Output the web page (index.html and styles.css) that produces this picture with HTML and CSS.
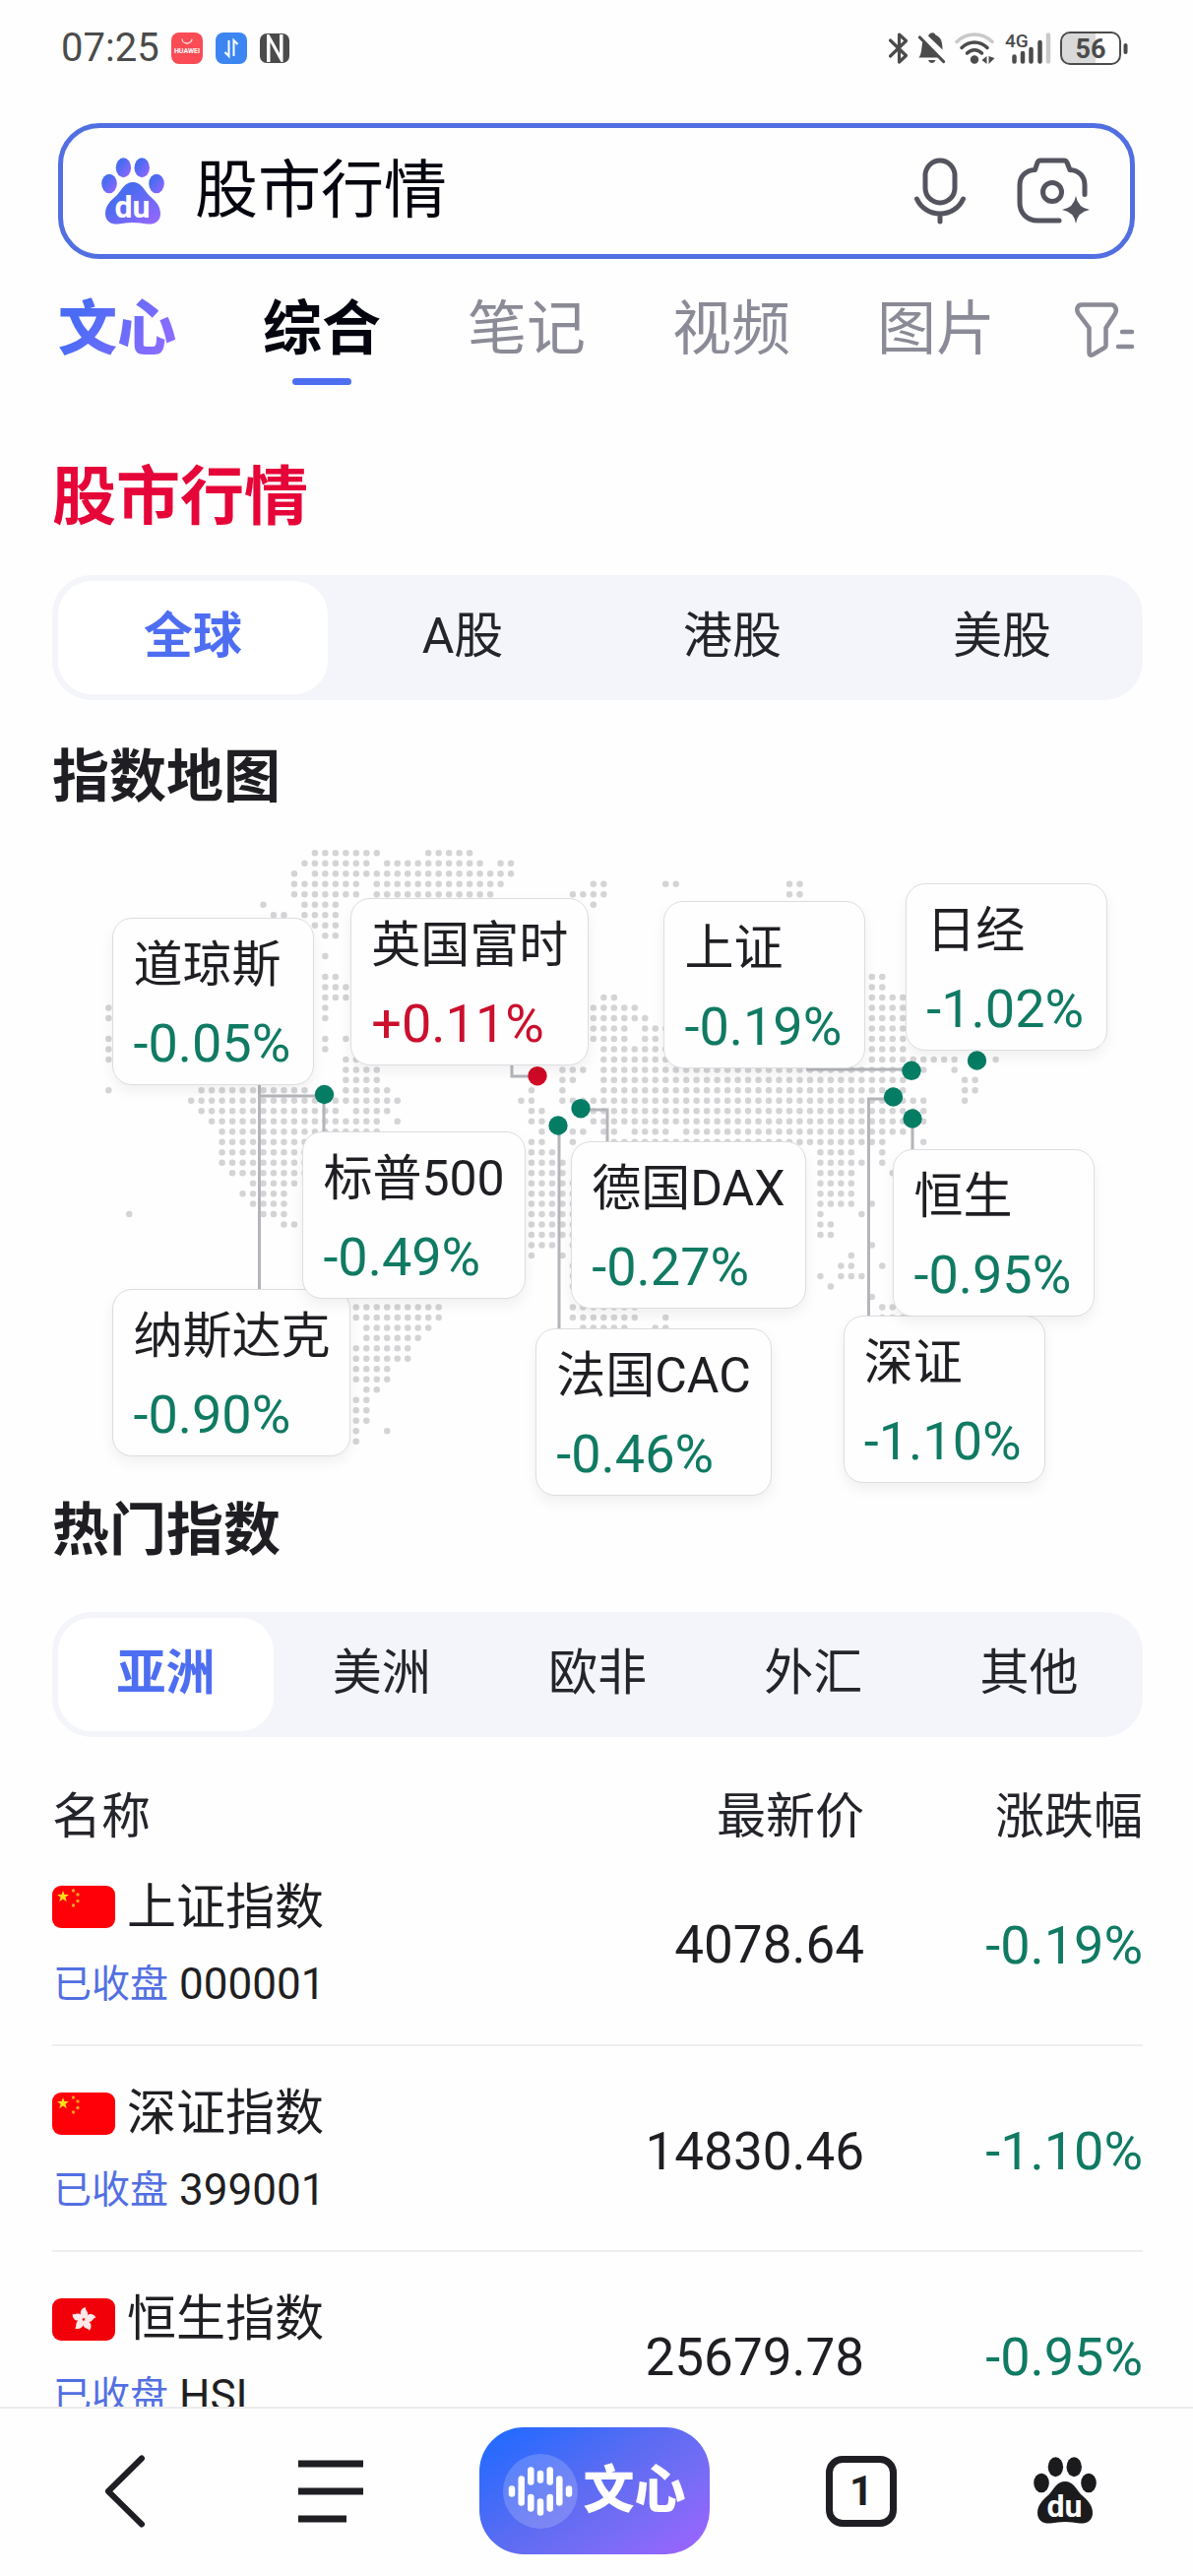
FILE: index.html
```html
<!DOCTYPE html>
<html lang="zh-CN">
<head>
<meta charset="utf-8">
<meta name="viewport" content="width=device-width, initial-scale=1">
<title>股市行情</title>
<link rel="stylesheet" href="styles.css">
</head>
<body>
<svg class="defs" width="0" height="0" aria-hidden="true">
  <defs>
    <linearGradient id="brand" x1="0" y1="0" x2="1" y2="1">
      <stop offset="0.3" stop-color="#4a6cf0"/><stop offset="1" stop-color="#9a66ff"/>
    </linearGradient>
    <symbol id="paw" viewBox="0 0 64 69">
      <ellipse cx="22.4" cy="10.2" rx="7.7" ry="10"/><ellipse cx="41.2" cy="10.2" rx="7.7" ry="10"/>
      <ellipse cx="8" cy="26.5" rx="7.8" ry="9.8"/><ellipse cx="56" cy="26.5" rx="7.8" ry="9.8"/>
      <path d="M32 25C40 25 43 32 48 38C55 44 60 49 60 57C60 65 54 68 47 67.5C41 67 38 66 32 66C26 66 23 67 17 67.5C10 68 4 65 4 57C4 49 9 44 16 38C21 32 24 25 32 25Z"/>
      <text class="paw-text" x="31.500" y="61" text-anchor="middle">du</text>
    </symbol>
    <symbol id="flag-cn" viewBox="0 0 64 43">
      <rect width="64" height="43" rx="9" fill="#ff0008"/>
      <path fill="#ffdf1a" d="M11 5l1.500 4h4.500l-3.600 2.700 1.400 4.500-3.800-2.700-3.800 2.700 1.400-4.500L5 9h4.500z"/>
      <g fill="#f7a01c"><circle cx="21.500" cy="5" r="1.700"/><circle cx="26" cy="9" r="1.700"/><circle cx="26" cy="15.500" r="1.700"/><circle cx="21.500" cy="20" r="1.700"/></g>
    </symbol>
    <symbol id="flag-hk" viewBox="0 0 64 43">
      <rect width="64" height="43" rx="9" fill="#f2000a"/>
      <g fill="#ffe9ea" transform="translate(32 21.500)">
        <path id="petal" d="M0-1C-5-5-4-11 2-12.500C1-10 5-8 4-4.500C3.500-2 1.500-1 0-1Z"/>
        <use href="#petal" transform="rotate(72)"/><use href="#petal" transform="rotate(144)"/>
        <use href="#petal" transform="rotate(216)"/><use href="#petal" transform="rotate(288)"/>
      </g>
    </symbol>
  </defs>
</svg>

<div class="app">
  <header class="status">
    <div class="status-group">
      <time class="clock">07:25</time>
      <svg class="app-badge" viewBox="0 0 32 32" aria-hidden="true"><rect width="32" height="32" rx="8" fill="#fb4b55"/><path d="M11 6.500a5 4.500 0 0 0 10 0" fill="none" stroke="#ffd9dc" stroke-width="1.300"/><text class="badge-text" x="16" y="20.500" text-anchor="middle">HUAWEI</text></svg>
      <svg class="app-badge" viewBox="0 0 32 32" aria-hidden="true"><rect width="32" height="32" rx="8" fill="#3d86f2"/><path d="M13.500 8v16l-4-4M18.500 24V8l4 4" fill="none" stroke="#fff" stroke-width="2"/></svg>
      <svg class="nfc" viewBox="0 0 30 30" aria-hidden="true"><rect width="30" height="30" rx="7" fill="#4b4b4b"/><path d="M7 1v28h3.500V9l11 20h2V1H20v19L9.500 1z" fill="#fff"/><path d="M12 12v16l6 2zM13.500 0l5 9V0z" fill="#4b4b4b"/></svg>
    </div>
    <div class="status-group status-right">
      <svg width="21" height="32" viewBox="0 0 21 32" aria-hidden="true"><path d="M1.500 8l16 15.500-7 6.500V2l7 6.500-16 15.500" fill="none" stroke="#4b4b4b" stroke-width="3.200" stroke-linejoin="round" stroke-linecap="round"/></svg>
      <svg width="28" height="32" viewBox="0 0 28 32" aria-hidden="true"><path d="M10 3.500C12-.5 16-.5 17.500 2.500C23 5 24.500 9 24.500 17.500zM4.500 8.500L22 25.500H.500C3.500 22 3 15 4.500 8.500zM10 28h7.500c-1.500 4-6 4-7.500 0z" fill="#4b4b4b"/><path d="M1.500 5l24 24.500" stroke="#4b4b4b" stroke-width="3.200" stroke-linecap="round"/></svg>
      <svg width="42" height="32" viewBox="0 0 42 32" aria-hidden="true"><g fill="none" stroke-width="3.500" stroke-linecap="round"><path d="M2 9.500c10-10 26-10 36 0" stroke="#c9c9c9"/><path d="M7 15.500c7.500-7.500 18.500-7.500 26 0M12.500 21c4.500-4.500 10.500-4.500 15 0" stroke="#4b4b4b"/></g><circle cx="20" cy="27.500" r="4.200" fill="#4b4b4b"/><path d="M32.500 24v8l-5-4zM34.500 24v8l6-6z" fill="#4b4b4b"/></svg>
      <svg class="signal" width="47" height="32" viewBox="0 0 47 32" aria-hidden="true"><g stroke="#4b4b4b" stroke-width="4.500" stroke-linecap="round"><path d="M9.500 24.500v5M18 21v8.500M26.500 17v12.500M35.500 10v19.500"/><path d="M44 2.500v27" stroke="#c9c9c9"/></g><text class="net-text" x="0" y="15">4G</text></svg>
      <svg width="69" height="34" viewBox="0 0 69 34" aria-hidden="true"><path d="M10 2h26v30H10a8 8 0 0 1-8-8V10a8 8 0 0 1 8-8z" fill="#d9d9d9"/><rect x="1" y="1" width="60" height="32" rx="9" fill="none" stroke="#4b4b4b" stroke-width="2"/><rect x="64.500" y="12" width="4" height="11" rx="2" fill="#4b4b4b"/><text class="battery-text" x="31" y="26.500" text-anchor="middle">56</text></svg>
    </div>
  </header>

  <main class="content">
    <form class="search">
      <svg class="paw" aria-hidden="true"><use href="#paw" fill="url(#brand)"/></svg>
      <input class="search-input" type="text" value="股市行情" aria-label="搜索">
      <button class="icon-button" type="button" aria-label="语音搜索">
        <svg width="54" height="68" viewBox="0 0 54 68" fill="none" stroke="#53545e" stroke-width="5" stroke-linecap="round"><rect x="12" y="3" width="30" height="43" rx="15"/><path d="M3.500 42c4 9 13 15 23.500 15s19.500-6 23.500-15M27 57v8"/></svg>
      </button>
      <button class="icon-button" type="button" aria-label="拍照搜索">
        <svg width="75" height="68" viewBox="0 0 75 68" fill="none" stroke="#53545e" stroke-width="5" stroke-linecap="round" stroke-linejoin="round"><path d="M69 37.500V28c0-9-6-15-15-15.500L51 5q-1-2-3-2H24q-2 0-3 2l-2.500 7.500C9 13 3 19 3 28v18c0 10 7 18 18 18h22"/><circle cx="36" cy="35" r="9.500"/><path d="M60 39q2 12 14 14-12 2-14 14-2-12-14-14 12-2 14-14z" fill="#53545e" stroke="none"/></svg>
      </button>
    </form>

    <nav class="tabs" aria-label="搜索分类">
      <a class="tab tab-brand" href="#">文心</a>
      <a class="tab tab-active" href="#" aria-current="page">综合</a>
      <a class="tab" href="#">笔记</a>
      <a class="tab" href="#">视频</a>
      <a class="tab" href="#">图片</a>
      <button class="icon-button filter" type="button" aria-label="筛选">
        <svg width="61" height="56" viewBox="0 0 61 56" fill="none" stroke="#8a8b96" stroke-width="4.500" stroke-linecap="round" stroke-linejoin="round"><path d="M7 2.500h30c4 0 6 5 4 9L31.500 26v17.500q0 2-2 3l-11 6.500q-4 2-4-2V26L3.500 11.500C1 7.500 2.500 2.500 7 2.500z"/><path d="M48 30h10M44 45h14"/></svg>
      </button>
    </nav>

    <h1 class="title">股市行情</h1>

    <div class="segmented">
      <button class="segment segment-active" type="button">全球</button>
      <button class="segment" type="button">A股</button>
      <button class="segment" type="button">港股</button>
      <button class="segment" type="button">美股</button>
    </div>

    <h2 class="heading">指数地图</h2>
    <section class="map" aria-label="指数地图">
      <svg class="map-art" viewBox="52 860 1108 660" aria-hidden="true">
        <g transform="translate(109.300 866.300) scale(10.480)">
          <path class="land" d="M20 0h6.100M31 0h4.100M19 1h6.100M27 1h9.100M38 1h1.100M18 2h.1M20 2h19.100M18 3h6.100M26 3h12.100M47 3h1.100M54 3h1.100M66 3h1.100M18 4h6.100M26 4h11.100M45 4h3.100M66 4h1.100M15 5h.1M19 5h3.100M47 5h.1M16 6h1.100M19 6h3.100M20 7h2.100M21 8h1.100M21 10h.1M21 12h1.100M74 12h1.100M21 13h2.100M74 13h1.100M21 14h2.100M48 14h1.100M74 14h3.100M0 15h.1M21 15h.1M47 15h4.100M74 15h3.100M0 16h.1M21 16h.1M47 16h5.100M74 16h3.100M47 17h3.100M52 17h2.100M74 17h3.100M0 18h.1M21 18h.1M23 18h.1M47 18h3.100M52 18h1.100M74 18h3.100M0 19h.1M21 19h.1M48 19h6.100M74 19h3.100M0 20h.1M23 20h1.100M48 20h6.100M74 20h8.100M86 20h.1M23 21h3.100M44 21h2.100M48 21h31.100M82 21h.1M23 22h3.100M44 22h1.100M48 22h29.100M83 22h1.100M0 23h.1M9 23h10.100M23 23h4.100M41 23h.1M44 23h.1M48 23h29.100M83 23h1.100M8 24h12.100M22 24h6.100M40 24h1.100M44 24h35.100M83 24h.1M9 25h13.100M24 25h3.100M41 25h1.100M46 25h33.100M10 26h16.100M28 26h.1M41 26h1.100M47 26h2.100M50 26h29.100M11 27h15.100M42 27h.1M45 27h1.100M48 27h1.100M51 27h3.100M56 27h21.100M11 28h8.100M41 28h1.100M45 28h.1M49 28h26.100M79 28h.1M11 29h8.100M41 29h2.100M69 29h3.100M75 29h.1M11 30h8.100M41 30h3.100M69 30h4.100M75 30h.1M12 31h7.100M41 31h3.100M69 31h3.100M76 31h.1M14 32h4.100M41 32h4.100M69 32h3.100M13 33h4.100M41 33h4.100M69 33h3.100M14 34h3.100M41 34h4.100M69 34h3.100M74 34h.1M2 35h.1M15 35h2.100M41 35h4.100M69 35h.1M73 35h.1M17 36h1.100M41 36h4.100M69 36h1.100M41 37h4.100M69 37h1.100M41 38h2.100M45 38h.1M74 38h.1M41 39h.1M44 39h.1M72 39h.1M45 40h.1M71 40h1.100M75 40h.1M45 41h.1M69 41h.1M71 41h2.100M45 42h.1M70 42h.1M74 43h.1M24 44h8.100M45 44h6.100M75 44h1.100M24 45h8.100M45 45h6.100M54 45h.1M75 45h2.100M25 46h6.100M46 46h4.100M53 46h1.100M25 47h5.100M24 48h5.100M24 49h5.100M24 50h3.100M24 51h3.100M25 52h1.100M24 53h1.100M24 54h1.100M24 55h1.100M24 56h.1M27 56h.1M24 57h.1"/>
        </g>
        <g class="leads">
          <path d="M262.500 1100V1312M262.500 1113H328V1152"/>
          <path d="M519 1080V1093H545"/>
          <path d="M589 1127H616V1160"/>
          <path d="M567 1143V1352"/>
          <path d="M818 1086H925"/>
          <path d="M906 1116H881.500V1340"/>
          <path d="M926 1136V1170"/>
        </g>
        <g class="cities">
          <circle cx="328.500" cy="1111.500" r="9.700"/>
          <circle class="city-up" cx="545" cy="1092.700" r="9.700"/>
          <circle cx="589" cy="1125.700" r="9.700"/>
          <circle cx="566" cy="1143" r="9.700"/>
          <circle cx="925" cy="1087.300" r="9.700"/>
          <circle cx="991.500" cy="1077" r="9.700"/>
          <circle cx="906.500" cy="1114" r="9.700"/>
          <circle cx="926" cy="1136" r="9.700"/>
        </g>
      </svg>
      <div class="pin pin-nasdaq"><span>纳斯达克</span><span class="pin-value down">-0.90%</span></div>
      <div class="pin pin-dow"><span>道琼斯</span><span class="pin-value down">-0.05%</span></div>
      <div class="pin pin-ftse"><span>英国富时</span><span class="pin-value up">+0.11%</span></div>
      <div class="pin pin-sse"><span>上证</span><span class="pin-value down">-0.19%</span></div>
      <div class="pin pin-nikkei"><span>日经</span><span class="pin-value down">-1.02%</span></div>
      <div class="pin pin-sp"><span>标普500</span><span class="pin-value down">-0.49%</span></div>
      <div class="pin pin-dax"><span>德国DAX</span><span class="pin-value down">-0.27%</span></div>
      <div class="pin pin-cac"><span>法国CAC</span><span class="pin-value down">-0.46%</span></div>
      <div class="pin pin-szse"><span>深证</span><span class="pin-value down">-1.10%</span></div>
      <div class="pin pin-hsi"><span>恒生</span><span class="pin-value down">-0.95%</span></div>
    </section>

    <h2 class="heading heading-hot">热门指数</h2>
    <div class="segmented">
      <button class="segment segment-active" type="button">亚洲</button>
      <button class="segment" type="button">美洲</button>
      <button class="segment" type="button">欧非</button>
      <button class="segment" type="button">外汇</button>
      <button class="segment" type="button">其他</button>
    </div>

    <table class="quotes">
      <thead>
        <tr><th class="col-name" scope="col">名称</th><th scope="col">最新价</th><th class="col-change" scope="col">涨跌幅</th></tr>
      </thead>
      <tbody>
        <tr>
          <td class="col-name"><div class="name"><svg class="flag" role="img" aria-label="中国"><use href="#flag-cn"/></svg>上证指数</div><div class="sub"><span class="state">已收盘</span>000001</div></td>
          <td class="number price">4078.64</td><td class="number down">-0.19%</td>
        </tr>
        <tr>
          <td class="col-name"><div class="name"><svg class="flag" role="img" aria-label="中国"><use href="#flag-cn"/></svg>深证指数</div><div class="sub"><span class="state">已收盘</span>399001</div></td>
          <td class="number price">14830.46</td><td class="number down">-1.10%</td>
        </tr>
        <tr>
          <td class="col-name"><div class="name"><svg class="flag" role="img" aria-label="中国香港"><use href="#flag-hk"/></svg>恒生指数</div><div class="sub"><span class="state">已收盘</span>HSI</div></td>
          <td class="number price">25679.78</td><td class="number down">-0.95%</td>
        </tr>
      </tbody>
    </table>
  </main>

  <footer class="toolbar">
    <button class="icon-button" type="button" aria-label="返回">
      <svg width="42" height="74" viewBox="0 0 42 74" fill="none" stroke="#1f1f23" stroke-width="6" stroke-linecap="round" stroke-linejoin="round"><path d="M38 3.500L4 37l34 33.500"/></svg>
    </button>
    <button class="icon-button" type="button" aria-label="菜单">
      <svg width="66" height="64" viewBox="0 0 66 64" stroke="#1f1f23" stroke-width="7"><path d="M0 4h66M0 32h66M0 60h49"/></svg>
    </button>
    <button class="assistant" type="button">
      <svg width="76" height="76" viewBox="-38 -38 76 76" aria-hidden="true"><circle r="38" fill="#fff" fill-opacity=".18"/><g stroke="#fff" stroke-width="6.500" stroke-linecap="round"><path d="M-29-2.500v5M-19.300-12.500v24M-9.700-21.500v12M0-18v6.500M9.700-21.500v12M19.300-12.500v24M29-2.500v5M-9.700 6v11.500M0 10.500v11M9.700 6v11.500"/></g></svg>
      <span>文心</span>
    </button>
    <button class="icon-button tab-count" type="button" aria-label="标签页">1</button>
    <button class="icon-button" type="button" aria-label="首页">
      <svg class="paw" aria-hidden="true"><use href="#paw" fill="#1b1b1e"/></svg>
    </button>
  </footer>
</div>
</body>
</html>
```
FILE: styles.css
```css
* {
  box-sizing: border-box;
}

body {
  margin: 0;
  background: #fefefe;
  color: #1f1f23;
  font-family: Roboto, "Noto Sans CJK SC", sans-serif;
  font-size: 50px;
}

button,
input {
  border: 0;
  padding: 0;
  background: none;
  color: inherit;
  font: inherit;
}

a {
  color: inherit;
  text-decoration: none;
}

svg {
  display: block;
  flex: none;
}

.defs {
  position: absolute;
}

.app {
  display: flex;
  flex-direction: column;
  height: 100vh;
}

/* Status bar */
.status {
  display: flex;
  flex: none;
  align-items: center;
  justify-content: space-between;
  height: 98px;
  padding: 0 66px 0 62px;
}

.status-group {
  display: flex;
  align-items: center;
}

.status-right {
  gap: 9px;
}

.clock {
  margin-right: 12px;
  color: #4b4b4b;
  font-size: 40px;
  line-height: 48px;
}

.app-badge {
  width: 32px;
  height: 32px;
  margin-right: 13px;
}

.nfc {
  width: 30px;
  height: 30px;
}

.signal {
  overflow: visible;
}

.badge-text {
  fill: #fff;
  font-size: 7px;
  font-weight: 700;
}

.net-text {
  fill: #4b4b4b;
  font-size: 19px;
  font-weight: 500;
}

.battery-text {
  fill: #4b4b4b;
  font-size: 27px;
  font-weight: 700;
}

/* Scrolling page */
.content {
  flex: 1;
  min-height: 0;
  padding: 27px 51px 0 53px;
  overflow-x: hidden;
  overflow-y: auto;
  scrollbar-width: none;
}

.icon-button {
  display: flex;
  align-items: center;
  justify-content: center;
}

.search {
  display: flex;
  align-items: center;
  height: 138px;
  margin: 0 8px 0 6px;
  padding: 0 40px 0 39px;
  border: 5px solid #526fe2;
  border-radius: 42px;
  gap: 51px;
}

.paw {
  width: 64px;
  height: 69px;
}

.paw-text {
  fill: #fff;
  font-size: 32px;
  font-weight: 700;
}

.search-input {
  flex: 1;
  min-width: 0;
  margin-left: -20px;
  color: #05050f;
  font-size: 64px;
  line-height: 90px;
  outline: 0;
}

.tabs {
  display: grid;
  grid-template-columns: repeat(5, 208fr) minmax(0, 54fr);
  justify-items: start;
  height: 128px;
  margin: 0 8px 0 6px;
  padding-top: 32px;
}

.tab {
  color: #8a8b96;
  font-size: 60px;
  line-height: 80px;
  white-space: nowrap;
}

.tab-brand {
  background: linear-gradient(120deg, #4a6cf5 20%, #8a6cff 80%);
  background-clip: text;
  -webkit-background-clip: text;
  color: transparent;
  font-weight: 900;
}

.tab-active {
  color: #05050f;
  font-weight: 700;
}

.tab-active::after {
  display: block;
  width: 60px;
  height: 7px;
  margin: 9px auto 0;
  border-radius: 4px;
  background: #4e6ef2;
  content: "";
}

.filter {
  justify-self: end;
  height: 80px;
}

.title {
  margin: 69px 0 34px;
  color: #e60538;
  font-size: 65px;
  font-weight: 700;
  line-height: 90px;
}

.heading {
  margin: 48px 0 41px;
  font-size: 58px;
  font-weight: 700;
  line-height: 60px;
}

.heading-hot {
  margin: 4px 0 53px;
}

.segmented {
  display: flex;
  height: 127px;
  padding: 6px;
  border-radius: 40px;
  background: #f4f5fa;
}

.segment {
  flex: 1;
  padding-bottom: 4px;
  border-radius: 34px;
  color: #24252b;
  line-height: 60px;
}

.segment-active {
  background: #fff;
  color: #4e6ef2;
  font-weight: 700;
}

/* World map with index cards pinned over it */
.map {
  position: relative;
}

.map-art {
  width: 100%;
  height: auto;
}

.land {
  fill: none;
  stroke: #d4d4d6;
  stroke-dasharray: 0 1;
  stroke-linecap: round;
  stroke-width: 0.62;
}

.leads {
  fill: none;
  stroke: #b4b5ba;
  stroke-width: 3;
}

.cities {
  fill: #057d64;
}

.city-up {
  fill: #d00a26;
}

.pin {
  position: absolute;
  display: flex;
  flex-direction: column;
  min-width: 205px;
  padding: 7px 20px 1px;
  border: 1px solid #dcdde0;
  border-radius: 20px;
  background: #fefefe;
  box-shadow: 0 6px 14px rgba(0, 0, 0, 0.06);
  line-height: 80px;
  white-space: nowrap;
}

.pin-value {
  font-size: 54px;
}

.pin-dow { left: 5.55%; top: 10.97%; }
.pin-ftse { left: 27.38%; top: 7.88%; }
.pin-sse { left: 56.09%; top: 8.26%; }
.pin-nikkei { left: 78.28%; top: 5.6%; }
.pin-sp { left: 22.96%; top: 43.8%; }
.pin-nasdaq { left: 5.55%; top: 68.03%; }
.pin-dax { left: 47.59%; top: 45.27%; }
.pin-cac { left: 44.34%; top: 74.1%; }
.pin-hsi { left: 77.12%; top: 46.5%; }
.pin-szse { left: 72.55%; top: 72.1%; }

.down {
  color: #107a63;
}

.up {
  color: #cb0f2d;
}

/* Quote table */
.quotes {
  width: 100%;
  border-collapse: collapse;
}

.quotes th {
  padding: 58px 0 0;
  color: #24252b;
  font-weight: 400;
  line-height: 46px;
  text-align: right;
}

.quotes td {
  height: 209px;
  padding: 6px 0 0;
  border-bottom: 2px solid #eeeeef;
}

.quotes .col-name {
  text-align: left;
}

.quotes td.col-name {
  padding: 28px 0 23px;
}

.col-change {
  width: 283px;
}

.name {
  display: flex;
  align-items: center;
  gap: 12px;
  line-height: 80px;
}

.flag {
  width: 64px;
  height: 43px;
}

.sub {
  display: flex;
  align-items: center;
  gap: 11px;
  padding-left: 1px;
  font-size: 44px;
  line-height: 76px;
}

.state {
  color: #526fe2;
  font-size: 39px;
}

.number {
  font-size: 54px;
  text-align: right;
}

.price {
  font-size: 53px;
}

/* Browser toolbar */
.toolbar {
  display: grid;
  flex: none;
  grid-template-columns: 254fr 164fr 372fr 170fr 244fr;
  align-items: center;
  justify-items: center;
  height: 172px;
  padding: 0 8px 3px 0;
  border-top: 2px solid #ebebec;
  background: #fefefe;
}

.assistant {
  display: flex;
  align-items: center;
  gap: 5px;
  height: 129px;
  padding: 0 24px;
  border-radius: 45px;
  background: linear-gradient(145deg, #256aff 8%, #5a6cf2 45%, #7a6cf6 72%, #a062ff);
  color: #fff;
  font-size: 52px;
  font-weight: 900;
  line-height: 60px;
}

.tab-count {
  width: 72px;
  height: 72px;
  border: 7px solid #1f1f23;
  border-radius: 17px;
  font-size: 42px;
  font-weight: 700;
}
```
